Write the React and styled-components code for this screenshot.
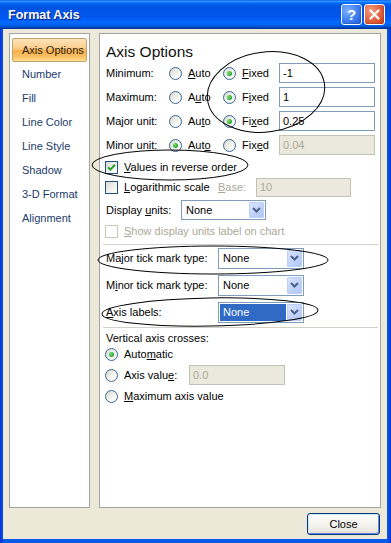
import React from "react";
import styled, { createGlobalStyle, css } from "styled-components";

const GlobalStyle = createGlobalStyle`
  html, body {
    margin: 0;
    padding: 0;
    background: #fff;
  }
  body {
    font-family: "Liberation Sans", Arial, sans-serif;
    font-size: 11px;
    color: #000;
  }
`;

const navItems = [
  "Axis Options",
  "Number",
  "Fill",
  "Line Color",
  "Line Style",
  "Shadow",
  "3-D Format",
  "Alignment",
];

const limits = [
  { label: "Minimum:", auto: ["", "A", "uto"], fixed: ["", "F", "ixed"], value: "-1", mode: "fixed" },
  { label: "Maximum:", auto: ["A", "u", "to"], fixed: ["F", "i", "xed"], value: "1", mode: "fixed" },
  { label: "Major unit:", auto: ["Au", "t", "o"], fixed: ["Fi", "x", "ed"], value: "0.25", mode: "fixed" },
  { label: "Minor unit:", auto: ["Aut", "o", ""], fixed: ["Fix", "e", "d"], value: "0.04", mode: "auto" },
];

const Mn = ({ parts }) => (
  <span>
    {parts[0]}
    <u>{parts[1]}</u>
    {parts[2]}
  </span>
);

const Chevron = () => (
  <svg width="9" height="6" viewBox="0 0 9 6">
    <path d="M1 1 L4.5 4.5 L8 1" fill="none" stroke="#4d6185" strokeWidth="2" />
  </svg>
);

const App = () => {
  return (
    <>
      <GlobalStyle />
      <Window>
        <TitleBar>
          <Title>Format Axis</Title>
          <CaptionButton>?</CaptionButton>
          <CaptionButton $close>
            <svg width="11" height="11" viewBox="0 0 11 11">
              <path d="M1.5 1.5 L9.5 9.5 M9.5 1.5 L1.5 9.5" stroke="#fff" strokeWidth="2.2" strokeLinecap="round" />
            </svg>
          </CaptionButton>
        </TitleBar>

        <Body>
          <Panels>
            <Nav>
              {navItems.map((item, i) => (
                <NavItem key={item} $active={i === 0}>
                  {item}
                </NavItem>
              ))}
            </Nav>

            <Panel>
              <Heading>Axis Options</Heading>

              <LimitGrid>
                {limits.map((row) => (
                  <React.Fragment key={row.label}>
                    <span>{row.label}</span>
                    <Choice>
                      <Radio $on={row.mode === "auto"} />
                      <Mn parts={row.auto} />
                    </Choice>
                    <Choice>
                      <Radio $on={row.mode === "fixed"} />
                      <Mn parts={row.fixed} />
                    </Choice>
                    <TextBox
                      readOnly
                      value={row.value}
                      $w={96}
                      $disabled={row.mode === "auto"}
                    />
                  </React.Fragment>
                ))}
              </LimitGrid>

              <Row $h={20} $indent={-1}>
                <Check $on />
                <span>
                  <u>V</u>alues in reverse order
                </span>
              </Row>

              <Row $h={20} $indent={-1}>
                <CheckLabel>
                  <Check />
                  <span>
                    <u>L</u>ogarithmic scale
                  </span>
                </CheckLabel>
                <FieldLabel $w={38} $muted>
                  <u>B</u>ase:
                </FieldLabel>
                <TextBox readOnly value="10" $w={95} $h={19} $disabled />
              </Row>

              <Row $h={24} $mt={1}>
                <FieldLabel $w={75}>
                  Display <u>u</u>nits:
                </FieldLabel>
                <Select $w={85} $h={20}>
                  <SelectValue>None</SelectValue>
                  <DropButton>
                    <Chevron />
                  </DropButton>
                </Select>
              </Row>

              <Row $h={18} $indent={-1} $muted>
                <Check $disabled />
                <span>
                  <u>S</u>how display units label on chart
                </span>
              </Row>

              <Separator $mt={4} />

              <Row $h={22} $mt={2}>
                <FieldLabel $w={112}>
                  Ma<u>j</u>or tick mark type:
                </FieldLabel>
                <Select $w={86} $h={21}>
                  <SelectValue>None</SelectValue>
                  <DropButton>
                    <Chevron />
                  </DropButton>
                </Select>
              </Row>

              <Row $h={22} $mt={5}>
                <FieldLabel $w={112}>
                  M<u>i</u>nor tick mark type:
                </FieldLabel>
                <Select $w={86} $h={21}>
                  <SelectValue>None</SelectValue>
                  <DropButton>
                    <Chevron />
                  </DropButton>
                </Select>
              </Row>

              <Row $h={22} $mt={5}>
                <FieldLabel $w={112}>
                  <u>A</u>xis labels:
                </FieldLabel>
                <Select $w={86} $h={21}>
                  <SelectValue $selected>None</SelectValue>
                  <DropButton>
                    <Chevron />
                  </DropButton>
                </Select>
              </Row>

              <Separator $mt={4} />

              <Row $h={16} $mt={2}>
                Vertical axis crosses:
              </Row>

              <Row $h={16} $indent={-1}>
                <Choice>
                  <Radio $on />
                  <span>
                    Auto<u>m</u>atic
                  </span>
                </Choice>
              </Row>

              <Row $h={20} $mt={3} $indent={-1}>
                <Choice>
                  <Radio />
                  <FieldLabel $w={65}>
                    Axis valu<u>e</u>:
                  </FieldLabel>
                </Choice>
                <TextBox readOnly value="0.0" $w={96} $disabled />
              </Row>

              <Row $h={18} $mt={2} $indent={-1}>
                <Choice>
                  <Radio />
                  <span>
                    <u>M</u>aximum axis value
                  </span>
                </Choice>
              </Row>
            </Panel>
          </Panels>

          <Footer>
            <Button type="button">Close</Button>
          </Footer>
        </Body>

        <Marks width="391" height="543" viewBox="0 0 391 543">
          <ellipse cx="266" cy="92" rx="59" ry="40" transform="rotate(-8 266 92)" />
          <ellipse cx="170" cy="165" rx="78" ry="15" />
          <ellipse cx="213" cy="260" rx="115" ry="14" />
          <ellipse cx="210" cy="312" rx="108" ry="14" transform="rotate(-1 210 312)" />
        </Marks>
      </Window>
    </>
  );
};

const Window = styled.div`
  position: relative;
  width: 391px;
  height: 543px;
  display: flex;
  flex-direction: column;
  background: linear-gradient(to right, #0831d9 0%, #0a5ae8 1%, #0a5ae8 99%, #0831d9 100%);
  overflow: hidden;
`;

const TitleBar = styled.div`
  height: 29px;
  flex: none;
  display: flex;
  align-items: center;
  gap: 2px;
  padding: 0 6px 0 8px;
  background: linear-gradient(
    to bottom,
    #0058ee 0%,
    #3593ff 4%,
    #288eff 6%,
    #127dff 8%,
    #036ffc 10%,
    #0262ee 14%,
    #0057e5 20%,
    #0054e3 24%,
    #0055eb 56%,
    #005bf5 66%,
    #026afe 76%,
    #0062ef 86%,
    #0052d6 92%,
    #0040ab 96%,
    #003092 100%
  );
`;

const Title = styled.div`
  flex: 1;
  color: #fff;
  font-weight: bold;
  font-size: 12.5px;
  text-shadow: 1px 1px 0 #0a1e80;
`;

const CaptionButton = styled.div`
  width: 21px;
  height: 21px;
  box-sizing: border-box;
  border: 1px solid #fff;
  border-radius: 3px;
  display: flex;
  align-items: center;
  justify-content: center;
  color: #fff;
  font-weight: bold;
  font-size: 15px;
  background: ${(p) =>
    p.$close
      ? "radial-gradient(circle at 30% 30%, #f29a7c 0%, #e2603c 55%, #cc3d16 100%)"
      : "radial-gradient(circle at 30% 30%, #7fb1fd 0%, #3c7ef2 55%, #2258d8 100%)"};
  box-shadow: inset -1px -1px 1px rgba(0, 0, 0, 0.15);
`;

const Body = styled.div`
  flex: 1;
  margin: 0 4px 4px 3px;
  padding: 4px 6px 4px 6px;
  background: #ece9d8;
  display: flex;
  flex-direction: column;
`;

const Panels = styled.div`
  height: 475px;
  display: flex;
  gap: 9px;
`;

const Nav = styled.div`
  width: 81px;
  flex: none;
  box-sizing: border-box;
  border: 1px solid #9fa3a6;
  background: #fff;
  padding: 4px 2px;
`;

const NavItem = styled.div`
  height: 24px;
  box-sizing: border-box;
  line-height: 22px;
  padding-left: 9px;
  color: #1c3b6b;
  border: 1px solid transparent;
  border-radius: 2px;
  white-space: nowrap;

  ${(p) =>
    p.$active &&
    css`
      color: #2a2410;
      border-color: #c2a270;
      background: linear-gradient(
        to bottom,
        #fde3ba 0%,
        #fbcf8d 40%,
        #f9b04a 55%,
        #fbc064 80%,
        #fde28f 100%
      );
    `}
`;

const Panel = styled.div`
  flex: 1;
  box-sizing: border-box;
  border: 1px solid #9fa3a6;
  background: #fff;
  padding: 9px 5px 0 6px;
  display: flex;
  flex-direction: column;
`;

const Heading = styled.div`
  height: 18px;
  line-height: 18px;
  font-size: 15.5px;
  color: #111;
`;

const LimitGrid = styled.div`
  display: grid;
  grid-template-columns: 63px 54px 56px 96px;
  grid-auto-rows: 24px;
  align-items: center;
`;

const Choice = styled.label`
  display: flex;
  align-items: center;
  gap: 6px;
`;

const Radio = styled.span`
  width: 13px;
  height: 13px;
  flex: none;
  box-sizing: border-box;
  border-radius: 50%;
  border: 1px solid #3a6491;
  background: linear-gradient(135deg, #d8d8d2 0%, #f6f6f3 60%, #fff 100%);
  display: inline-flex;
  align-items: center;
  justify-content: center;

  &::after {
    content: "";
    width: 5px;
    height: 5px;
    border-radius: 50%;
    background: radial-gradient(circle at 35% 35%, #7be07b 0%, #2fae2f 60%, #1d911d 100%);
    display: ${(p) => (p.$on ? "block" : "none")};
  }
`;

const Check = ({ $on, $disabled }) => (
  <CheckBox $disabled={$disabled}>
    {$on && (
      <svg width="9" height="9" viewBox="0 0 9 9">
        <path d="M1 4.2 L3.4 6.6 L8 1.8" fill="none" stroke="#21a121" strokeWidth="2" />
      </svg>
    )}
  </CheckBox>
);

const CheckBox = styled.span`
  width: 13px;
  height: 13px;
  flex: none;
  box-sizing: border-box;
  margin-right: 6px;
  border: 1px solid ${(p) => (p.$disabled ? "#cac8bb" : "#1c5180")};
  background: ${(p) =>
    p.$disabled ? "#fff" : "linear-gradient(135deg, #dcdcd7 0%, #f3f3ef 60%, #fff 100%)"};
  display: inline-flex;
  align-items: center;
  justify-content: center;
`;

const CheckLabel = styled.div`
  width: 113px;
  display: flex;
  align-items: center;
`;

const Row = styled.div`
  display: flex;
  align-items: center;
  height: ${(p) => p.$h}px;
  margin-top: ${(p) => p.$mt || 0}px;
  margin-left: ${(p) => p.$indent || 0}px;
  color: ${(p) => (p.$muted ? "#aca899" : "#000")};
  white-space: nowrap;
`;

const FieldLabel = styled.span`
  width: ${(p) => p.$w}px;
  flex: none;
  color: ${(p) => (p.$muted ? "#aca899" : "inherit")};
`;

const TextBox = styled.input`
  width: ${(p) => p.$w}px;
  height: ${(p) => p.$h || 20}px;
  box-sizing: border-box;
  margin: 0;
  padding: 0 3px;
  font: inherit;
  font-size: 11px;
  border: 1px solid ${(p) => (p.$disabled ? "#c4c2b5" : "#7f9db9")};
  background: ${(p) => (p.$disabled ? "#ebe9de" : "#fff")};
  color: ${(p) => (p.$disabled ? "#aca899" : "#000")};
  outline: none;
`;

const Select = styled.div`
  width: ${(p) => p.$w}px;
  height: ${(p) => p.$h}px;
  box-sizing: border-box;
  border: 1px solid #7f9db9;
  background: #fff;
  padding: 1px;
  display: flex;
`;

const SelectValue = styled.div`
  flex: 1;
  display: flex;
  align-items: center;
  padding-left: 3px;
  margin-right: 1px;
  background: ${(p) => (p.$selected ? "#316ac5" : "transparent")};
  color: ${(p) => (p.$selected ? "#fff" : "#000")};
`;

const DropButton = styled.div`
  width: 15px;
  box-sizing: border-box;
  border: 1px solid #bccefa;
  border-radius: 1px;
  background: linear-gradient(135deg, #dbe6fd 0%, #c3d4fb 50%, #b1c6f6 100%);
  display: flex;
  align-items: center;
  justify-content: center;
`;

const Separator = styled.div`
  height: 1px;
  margin: ${(p) => p.$mt || 0}px -3px 0 -3px;
  background: #d3d1c5;
`;

const Footer = styled.div`
  display: flex;
  justify-content: flex-end;
  margin-top: 5px;
  padding-right: 1px;
`;

const Button = styled.button`
  width: 73px;
  height: 22px;
  padding: 0;
  font: inherit;
  font-size: 11px;
  color: #000;
  border: 1px solid #003c74;
  border-radius: 3px;
  background: linear-gradient(to bottom, #ffffff 0%, #f6f5f1 45%, #ebe9e1 85%, #d8d3c6 100%);
  box-shadow: inset 1px 1px 0 #cee7ff, inset -1px -1px 0 #6982ee;
`;

const Marks = styled.svg`
  position: absolute;
  left: 0;
  top: 0;
  pointer-events: none;

  ellipse {
    fill: none;
    stroke: #000;
    stroke-width: 1;
  }
`;

export default App;
